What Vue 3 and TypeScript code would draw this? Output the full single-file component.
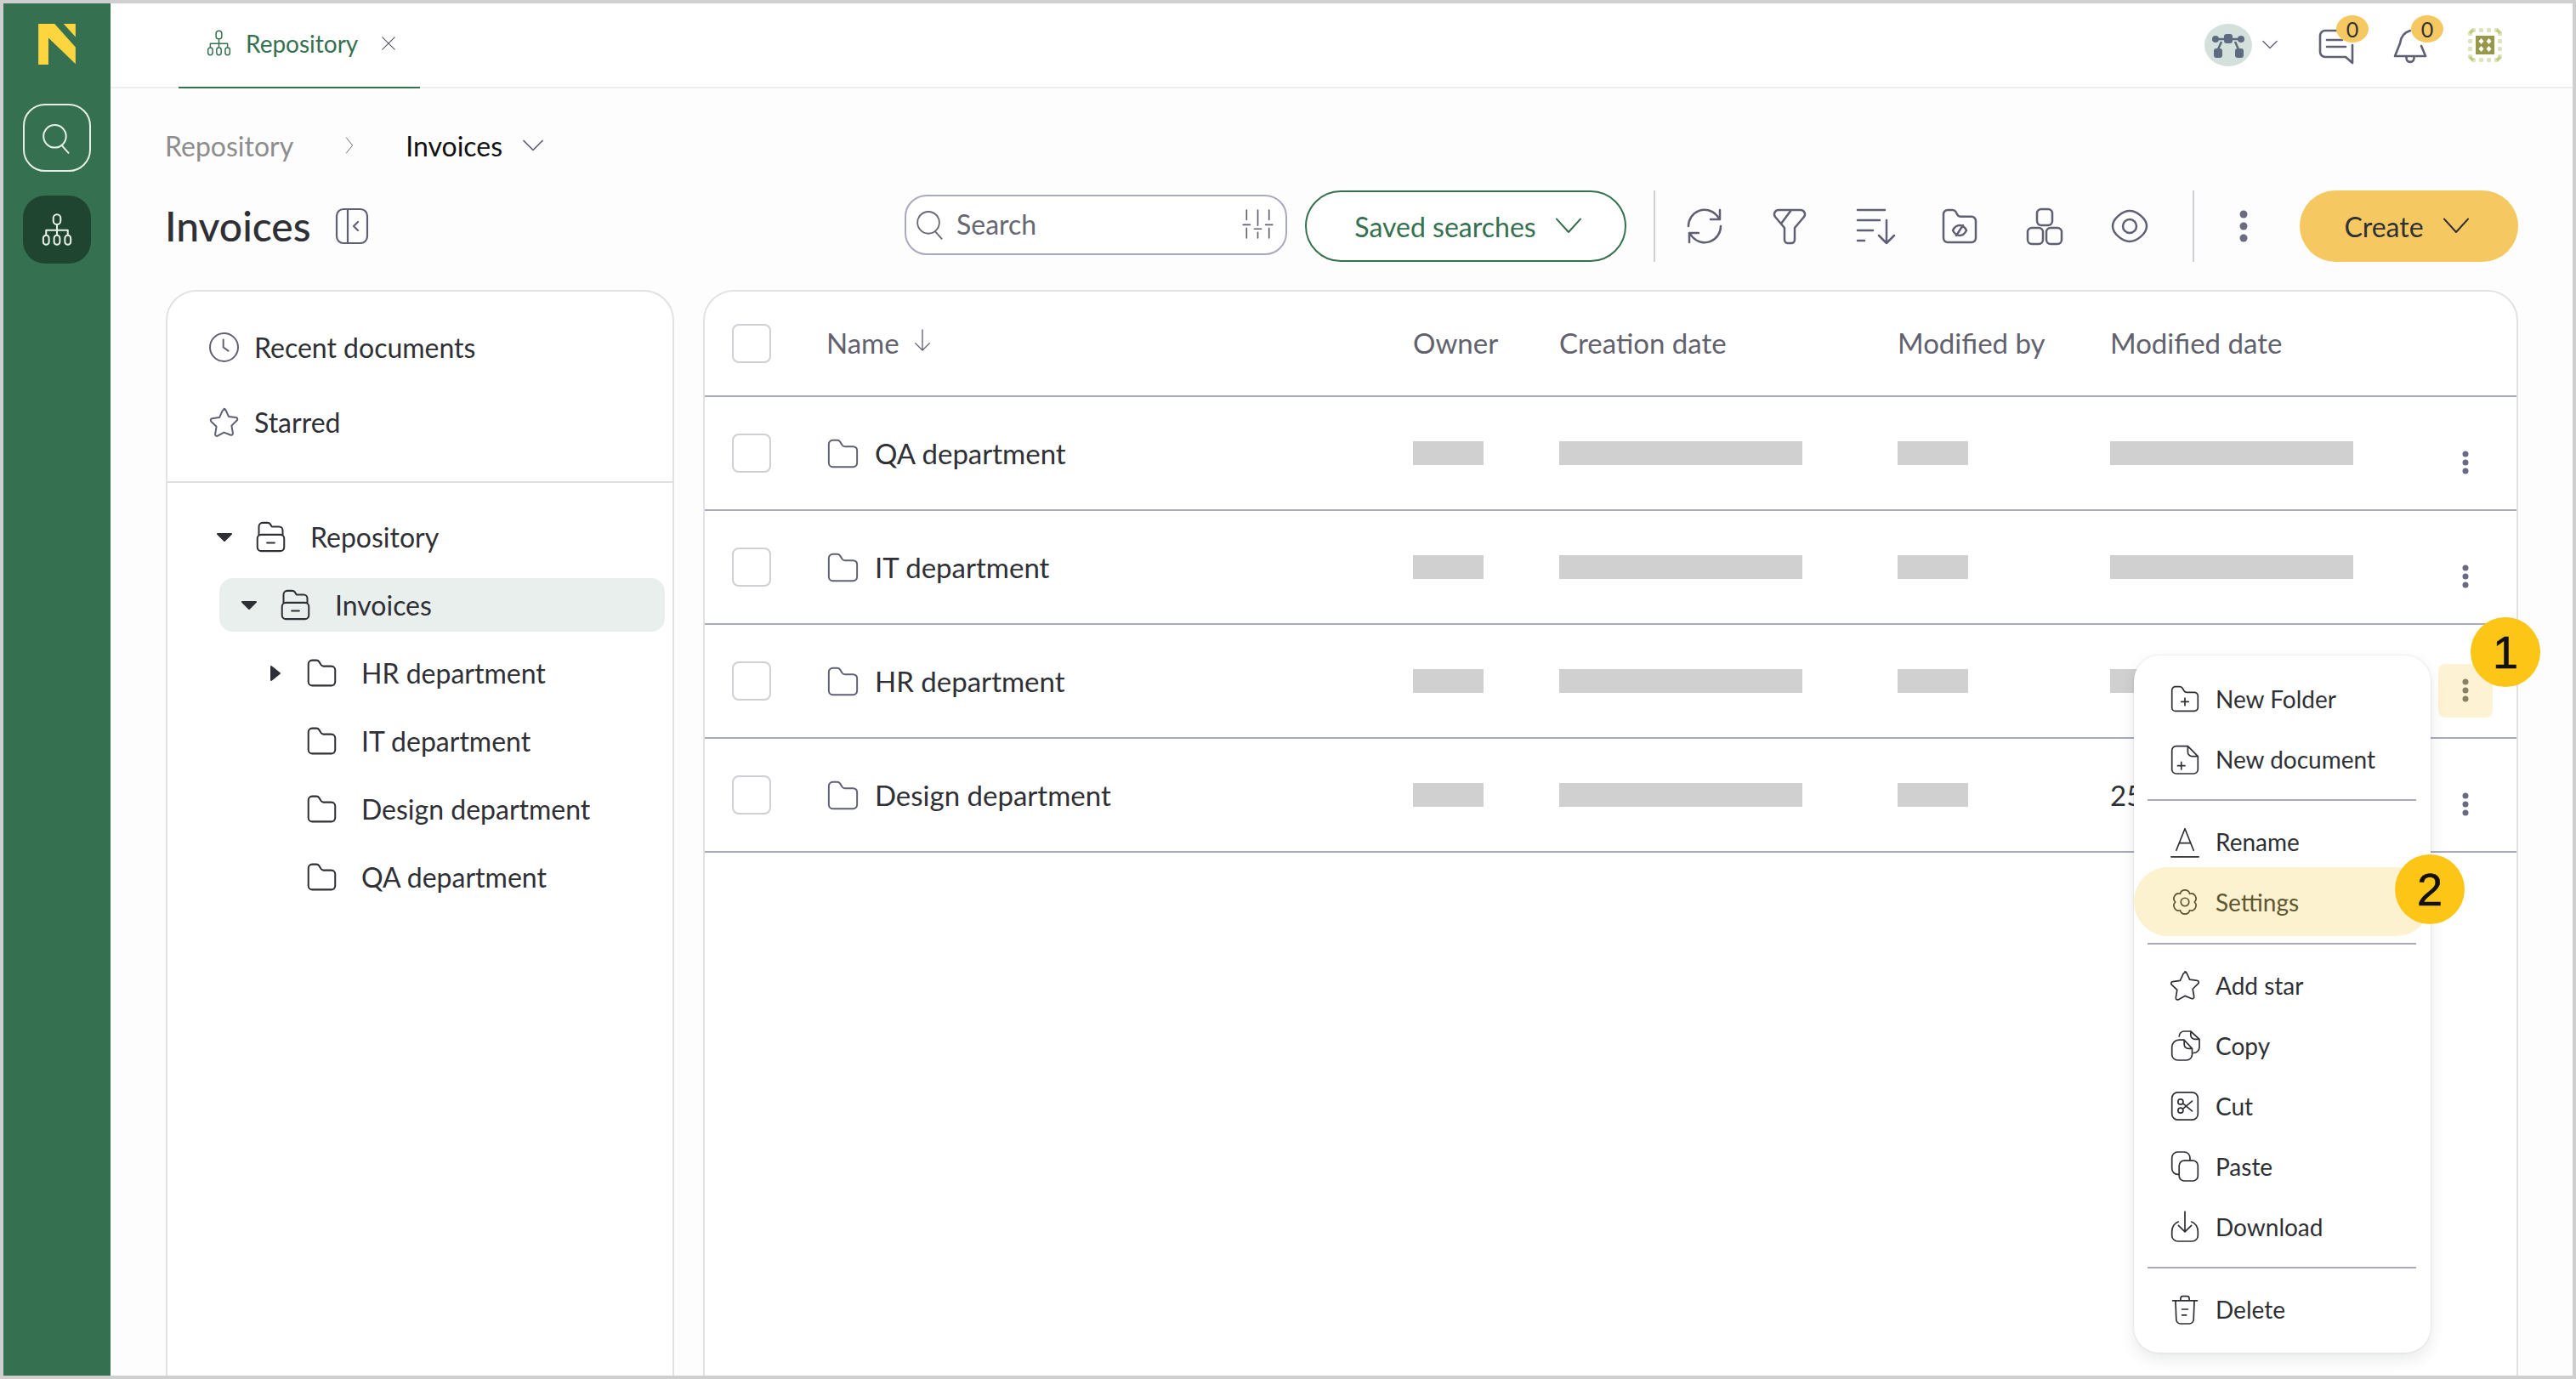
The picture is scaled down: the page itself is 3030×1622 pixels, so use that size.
<template>
  <div class="frame">
    <aside class="rail">
      <svg class="logo" viewBox="42 38 133 146">
        <path fill="#fdd53f" d="M42 38H100L175 122V182L78 88V184H42Z" />
        <path fill="#fdd53f" d="M132 38H175V85Z" />
      </svg>
      <button class="rail-btn outlined">
        <svg class="ic" viewBox="2 2 20 20"><path :d="icons.search" /></svg>
      </button>
      <button class="rail-btn active">
        <svg class="ic" viewBox="2 2 20 20"><path :d="icons.org" /></svg>
      </button>
    </aside>

    <div class="main">
      <header class="topbar">
        <div class="tab">
          <svg class="ic tab-icon" viewBox="2 2 20 20"><path :d="icons.org" /></svg>
          <span>Repository</span>
          <svg class="ic tab-close" viewBox="2 2 20 20"><path d="M4 4l16 16M20 4L4 20" /></svg>
        </div>
        <div class="top-tools">
          <div class="avatar">
            <svg viewBox="0 0 56 50" width="56" height="50">
              <path d="M15 18h8M33 18h8M20 21l-4 9M36 21l4 9" fill="none" stroke="#5d6a80" stroke-width="2.5" />
              <circle cx="13" cy="18" r="4" fill="#5d6a80" />
              <circle cx="43" cy="18" r="4" fill="#5d6a80" />
              <rect x="23" y="12" width="10" height="11" rx="3" fill="#5d6a80" />
              <rect x="11" y="29" width="10" height="11" rx="3" fill="#5d6a80" />
              <rect x="36" y="29" width="10" height="11" rx="3" fill="#5d6a80" />
            </svg>
          </div>
          <svg class="ic avatar-chevron" viewBox="2 2 20 20"><path d="M3 7l9 9 9-9" /></svg>
          <div class="tool chat">
            <svg class="ic" viewBox="2 2 20 20"><path :d="icons.chat" /></svg>
            <span class="count">0</span>
          </div>
          <div class="tool bell">
            <svg class="ic" viewBox="2 2 20 20"><path :d="icons.bell" /></svg>
            <span class="count">0</span>
          </div>
          <svg class="chip" viewBox="0 0 40 40" width="40" height="40">
            <rect v-for="d in chipDots" :key="d.k" :x="d.x" :y="d.y" width="5" height="5" rx="1.5" fill="#dfe3bd" />
            <path d="M2 6l4-4M34 2l4 4M2 34l4 4M34 38l4-4" stroke="#c3ca7c" stroke-width="3.5" fill="none" />
            <rect x="9" y="9" width="22" height="22" fill="#97994a" />
            <path fill="#fff" d="M15.500 12l3 3.500-3 3.500-3-3.500zM24.500 12l3 3.500-3 3.500-3-3.500zM15.500 21l3 3.500-3 3.500-3-3.500zM24.500 21l3 3.500-3 3.500-3-3.500z" />
          </svg>
        </div>
      </header>

      <section class="content">
        <nav class="crumbs">
          <span class="crumb-root">Repository</span>
          <svg class="ic crumb-sep" viewBox="7 1 10 22"><path d="M8 2l8 10-8 10" /></svg>
          <span class="crumb-current">Invoices</span>
          <svg class="ic crumb-chevron" viewBox="2 2 20 20"><path d="M2 7l10 10L22 7" /></svg>
        </nav>

        <div class="toolbar">
          <h1>Invoices</h1>
          <svg class="ic collapse" viewBox="3 2 18 20"><path :d="icons.collapse" /></svg>
          <div class="search">
            <svg class="ic" viewBox="2 2 20 20"><path :d="icons.search" /></svg>
            <span>Search</span>
            <svg class="ic tuner" viewBox="2 2 20 20"><path :d="icons.tuner" /></svg>
          </div>
          <button class="saved">
            Saved searches
            <svg class="ic" viewBox="2 2 20 20"><path d="M2 6l10 11L22 6" /></svg>
          </button>
          <span class="vsep first"></span>
          <div class="actions">
            <svg v-for="a in toolbarIcons" :key="a" class="ic" viewBox="2 2 20 20"><path :d="icons[a]" /></svg>
          </div>
          <span class="vsep second"></span>
          <svg class="dots big" viewBox="0 0 10 38"><circle cx="5" cy="5" r="4.500" /><circle cx="5" cy="19" r="4.500" /><circle cx="5" cy="33" r="4.500" /></svg>
          <button class="create">
            Create
            <svg class="ic" viewBox="2 2 20 20"><path d="M2 6l10 11L22 6" /></svg>
          </button>
        </div>

        <div class="panels">
          <aside class="side-panel">
            <div class="quick">
              <div class="quick-item">
                <svg class="ic" viewBox="2 2 20 20"><path :d="icons.clock" /></svg>Recent documents
              </div>
              <div class="quick-item">
                <svg class="ic" viewBox="2 2 20 20"><path :d="icons.star" /></svg>Starred
              </div>
            </div>
            <div class="tree">
              <div
                v-for="node in tree"
                :key="node.name"
                class="tree-row"
                :class="{ selected: node.selected, root: node.level === 0 }"
                :style="{ paddingLeft: indents[node.level] + 'px' }"
              >
                <span class="caret">
                  <svg v-if="node.caret === 'down'" viewBox="0 0 20 12" width="20" height="12"><path d="M2 2h16l-8 8z" /></svg>
                  <svg v-else-if="node.caret === 'right'" viewBox="0 0 14 20" width="14" height="20"><path d="M2 2l10 8-10 8z" /></svg>
                </span>
                <svg class="ic" viewBox="2 2 20 20"><path :d="node.open ? icons.folderOpen : icons.folder" /></svg>
                <span>{{ node.name }}</span>
              </div>
            </div>
          </aside>

          <div class="table-panel">
            <div class="row head">
              <span class="check"></span>
              <span class="name-head">
                Name
                <svg class="ic" viewBox="2 2 20 20"><path d="M12 2v20M5 15l7 7 7-7" /></svg>
              </span>
              <span class="label">Owner</span>
              <span class="label">Creation date</span>
              <span class="label">Modified by</span>
              <span class="label">Modified date</span>
            </div>
            <div v-for="(r, i) in rows" :key="r" class="row">
              <span class="check"></span>
              <span class="name">
                <svg class="ic" viewBox="2 2 20 20"><path :d="icons.folder" /></svg>{{ r }}
              </span>
              <span class="bar short"></span>
              <span class="bar long"></span>
              <span class="bar short"></span>
              <span v-if="i === 3" class="date">25</span>
              <span v-else class="bar long"></span>
              <span class="kebab" :class="{ hot: i === 2 }">
                <svg class="dots" viewBox="0 0 8 28"><circle cx="4" cy="4" r="3.500" /><circle cx="4" cy="14" r="3.500" /><circle cx="4" cy="24" r="3.500" /></svg>
              </span>
            </div>

            <div class="menu">
              <template v-for="(group, gi) in menu" :key="gi">
                <div v-if="gi > 0" class="menu-sep"></div>
                <div
                  v-for="m in group"
                  :key="m.label"
                  class="menu-item"
                  :class="{ settings: m.label === 'Settings', rename: m.label === 'Rename' }"
                >
                  <svg class="ic" viewBox="2 2 20 20"><path :d="icons[m.icon]" /></svg>
                  {{ m.label }}
                </div>
              </template>
            </div>
            <span class="step one">1</span>
            <span class="step two">2</span>
          </div>
        </div>
      </section>
    </div>
  </div>
</template>

<script setup lang="ts">
// rounded rect as path data, so each icon stays a single <path>
const rr = (x: number, y: number, w: number, h: number, r: number) =>
  `M${x + r} ${y}h${w - 2 * r}a${r} ${r} 0 0 1 ${r} ${r}v${h - 2 * r}a${r} ${r} 0 0 1 -${r} ${r}h-${w - 2 * r}a${r} ${r} 0 0 1 -${r} -${r}v-${h - 2 * r}a${r} ${r} 0 0 1 ${r} -${r}z`

const circle = (cx: number, cy: number, r: number) =>
  `M${cx - r} ${cy}a${r} ${r} 0 1 0 ${2 * r} 0a${r} ${r} 0 1 0 -${2 * r} 0z`

// six scalloped lobes, one pointing straight up
function gear() {
  const pt = (k: number) => {
    const a = ((-120 + 60 * k) * Math.PI) / 180
    return `${(12 + 6.6 * Math.cos(a)).toFixed(2)} ${(12 + 6.6 * Math.sin(a)).toFixed(2)}`
  }
  let d = `M${pt(0)}`
  for (let k = 1; k <= 6; k++) d += `A3.4 3.4 0 0 1 ${pt(k)}`
  return `${d}z${circle(12, 12, 2.8)}`
}

const folder = 'M3 6A2.500 2.500 0 0 1 5.500 3.500h2.800c.8 0 1.500.4 1.900 1l1.300 2.100c.4.6 1 .9 1.700.9h5.300A2.500 2.500 0 0 1 21 10v8a2.500 2.500 0 0 1-2.500 2.500h-13A2.500 2.500 0 0 1 3 18z'

const icons: Record<string, string> = {
  search: `${circle(10.5, 11, 7.8)}M15.500 17.500l4.500 5`,
  org: `${rr(9.5, 1.5, 5, 7, 2.5)}M12 8.500V16M4.500 16v-3.500h15V16${rr(2.5, 16, 4, 6.5, 2)}${rr(10, 16, 4, 6.5, 2)}${rr(17.5, 16, 4, 6.5, 2)}`,
  chat: 'M13 3.500H6a3 3 0 0 0-3 3V16a3 3 0 0 0 3 3h12l4 3.500V12M7 9h9M7 13h11',
  bell: 'M12 3.500c-3.500 1-5.500 3.500-6 7.500l-3 7.500h18l-2.500-6M10 18.500a2.300 2.300 0 1 0 4 0',
  collapse: `${rr(3, 2, 18, 20, 4)}M9.500 2v20M15.500 9.500L13 12l2.500 2.500`,
  tuner: 'M4 2v7M4 15v7M1.500 12.500h5M12 2v11M12 18v4M9.500 15.500h5M20 2v7M20 15v7M17.500 12.500h5',
  refresh: 'M2.500 12A9.500 9.500 0 0 1 19 5.500L21 8M21 2.500V8h-5.500M21.500 12A9.500 9.500 0 0 1 5 18.500L3 16M3 21.500V16h5.500',
  funnel: 'M5.500 2.500h13a2.500 2.500 0 0 1 1.900 4.100L15 13v7a2 2 0 0 1-2 2h-2a2 2 0 0 1-2-2v-7L3.600 6.600A2.500 2.500 0 0 1 5.500 2.500zM13 2.500L7 10.500',
  sort: 'M2 2.500h16M2 8.500h13M2 14.500h9M2 20.500h4M19 8.500V22M14.500 17.500L19 22l4.500-4.500',
  folderEye: 'M2.500 5A2.500 2.500 0 0 1 5 2.500h2.800c.8 0 1.500.4 1.900 1l1 1.800c.4.7 1.100 1.100 1.900 1.100H19A2.500 2.500 0 0 1 21.500 9v10A2.500 2.500 0 0 1 19 21.500H5A2.500 2.500 0 0 1 2.500 19zM8 14.500c1-2 2.500-3 4-3s3 1 4 3c-1 2-2.500 3-4 3s-3-1-4-3zM14 11.500l-4 6',
  shapes: `${rr(7.5, 2, 9, 9.5, 2.5)}${rr(2, 13, 9, 9.5, 2.5)}${rr(13, 13, 9, 9.5, 2.5)}`,
  eye: `M12 3c4 0 10 4.500 10 9s-6 9-10 9-10-4.500-10-9 6-9 10-9z${circle(12, 12, 4)}`,
  clock: `${circle(12, 12, 10)}M11.500 6.500V12l3.500 2.500`,
  star: 'M12 2.500c.5 0 .9.300 1.100.700l2.200 4.800 5.200.7c1 .1 1.400 1.400.7 2.100l-3.800 3.700.9 5.300c.2 1-.9 1.800-1.800 1.300L12 19.300l-4.500 2.500c-.9.500-2-.3-1.800-1.300l.9-5.300-3.800-3.700c-.7-.7-.3-2 .7-2.100l5.200-.7 2.200-4.800c.2-.4.600-.7 1.100-.7z',
  folder,
  folderOpen: `M4 10.500V5A2.500 2.500 0 0 1 6.500 2.500h3.300c.8 0 1.500.4 1.900 1l1 1.600h4.800A2.500 2.500 0 0 1 20 7.600v2.900M5.500 10.500h13A2.500 2.500 0 0 1 21 13v6a2.500 2.500 0 0 1-2.500 2.500h-13A2.500 2.500 0 0 1 3 19v-6a2.500 2.500 0 0 1 2.500-2.500zM9.500 16h5`,
  newFolder: `${folder}M12 11.500v5M9.500 14h5`,
  newDoc: 'M14 3H6a3 3 0 0 0-3 3v13a3 3 0 0 0 3 3h12a3 3 0 0 0 3-3v-9l-7-7zM14 3v4a3 3 0 0 0 3 3h4M9.500 14v5M7 16.500h5',
  rename: 'M6 18L12 3l6 15M8 13h8M2.500 22.500h19',
  gear: gear(),
  copy: 'M3 13a5 5 0 0 1 5-5h3.500l5.500 6v4a4 4 0 0 1-4 4H7a4 4 0 0 1-4-4zM11.500 8v3a3 3 0 0 0 3 3H17M8 5.500A3.500 3.500 0 0 1 11.500 2h4.500l6 5.500V13a4 4 0 0 1-4 4M16 2v2.500a3 3 0 0 0 3 3h3',
  cut: `${rr(3, 2.5, 18, 19, 4)}${circle(9, 9, 1.8)}${circle(9, 15, 1.8)}M10.500 10L17 15.500M10.500 14L17 8.500`,
  paste: `M8 17.500H7A4 4 0 0 1 3 13.500V6a4 4 0 0 1 4-4h4.500a4 4 0 0 1 4 4v1.500${rr(8, 8, 13, 14, 3.5)}`,
  download: 'M12 1.500V15M7.500 11l4.500 4.500 4.500-4.500M7.500 8.500C5 9.500 3 12 3 15.500V18a4 4 0 0 0 4 4h10a4 4 0 0 0 4-4v-2.500c0-3.500-2-6-4.500-7',
  trash: 'M3.500 6h17M9 6V4.500A1.500 1.500 0 0 1 10.500 3h3A1.500 1.500 0 0 1 15 4.500V6M5.500 6l.5 13a3 3 0 0 0 3 3h6a3 3 0 0 0 3-3l.5-13M10 12h4M10 16h3',
}

const toolbarIcons = ['refresh', 'funnel', 'sort', 'folderEye', 'shapes', 'eye']

interface TreeNode {
  name: string
  level: number
  caret?: 'down' | 'right'
  open?: boolean
  selected?: boolean
}

const indents = [10, 25, 56]

const tree: TreeNode[] = [
  { name: 'Repository', level: 0, caret: 'down', open: true },
  { name: 'Invoices', level: 1, caret: 'down', open: true, selected: true },
  { name: 'HR department', level: 2, caret: 'right' },
  { name: 'IT department', level: 2 },
  { name: 'Design department', level: 2 },
  { name: 'QA department', level: 2 },
]

const rows = ['QA department', 'IT department', 'HR department', 'Design department']

const menu = [
  [
    { label: 'New Folder', icon: 'newFolder' },
    { label: 'New document', icon: 'newDoc' },
  ],
  [
    { label: 'Rename', icon: 'rename' },
    { label: 'Settings', icon: 'gear' },
  ],
  [
    { label: 'Add star', icon: 'star' },
    { label: 'Copy', icon: 'copy' },
    { label: 'Cut', icon: 'cut' },
    { label: 'Paste', icon: 'paste' },
    { label: 'Download', icon: 'download' },
  ],
  [{ label: 'Delete', icon: 'trash' }],
]

// ring of small squares round the chip icon
const chipDots: { k: number; x: number; y: number }[] = []
for (let i = 0; i < 4; i++) {
  const p = 4 + i * 9
  chipDots.push({ k: i, x: p, y: 0 }, { k: i + 10, x: p, y: 35 }, { k: i + 20, x: 0, y: p }, { k: i + 30, x: 35, y: p })
}
</script>

<style>
html,
body {
  margin: 0;
  background: #fff;
}
</style>

<style scoped>
.frame {
  width: 3030px;
  height: 1622px;
  box-sizing: border-box;
  border: 4px solid #cfcfcf;
  display: flex;
  overflow: hidden;
  font-family: Lato, "Liberation Sans", sans-serif;
  color: #2f3035;
  background: #fdfdfd;
}

.ic {
  fill: none;
  stroke: currentColor;
  stroke-width: 1.4;
  stroke-linecap: round;
  stroke-linejoin: round;
  flex: none;
  overflow: visible;
}

/* left rail */
.rail {
  width: 126px;
  flex: none;
  background: #357050;
  display: flex;
  flex-direction: column;
  align-items: center;
  padding-top: 24px;
  box-sizing: border-box;
}

.logo {
  width: 44px;
  height: 48px;
  margin-bottom: 46px;
}

.rail-btn {
  width: 80px;
  height: 80px;
  border-radius: 26px;
  border: 2px solid transparent;
  background: none;
  padding: 0;
  display: flex;
  align-items: center;
  justify-content: center;
  color: #e6efe6;
  margin-bottom: 28px;
}

.rail-btn .ic {
  width: 34px;
  height: 34px;
  stroke-width: 1.2;
}

.rail-btn.outlined {
  border-color: #e6efe6;
}

.rail-btn.active {
  background: #1f4530;
}

/* top bar */
.main {
  flex: 1;
  min-width: 0;
  display: flex;
  flex-direction: column;
}

.topbar {
  height: 100px;
  flex: none;
  box-sizing: border-box;
  background: #fff;
  border-bottom: 2px solid #eeeeee;
  display: flex;
  align-items: stretch;
  padding-left: 80px;
  padding-right: 83px;
}

.tab {
  width: 284px;
  height: 100px;
  box-sizing: border-box;
  padding: 0 0 5px 34px;
  border-bottom: 2px solid #357050;
  color: #357050;
  font-size: 28px;
  display: flex;
  align-items: center;
}

.tab-icon {
  width: 27px;
  height: 27px;
  margin-right: 18px;
  stroke-width: 1.1;
}

.tab-close {
  width: 18px;
  height: 18px;
  margin-left: 27px;
  stroke-width: 1.2;
  color: #55555f;
}

.top-tools {
  margin-left: auto;
  display: flex;
  align-items: center;
}

.avatar {
  width: 56px;
  height: 50px;
  border-radius: 50%;
  background: #d3e0dc;
}

.avatar-chevron {
  width: 18px;
  height: 18px;
  margin: 0 48px 0 12px;
  color: #5f6073;
  stroke-width: 1.5;
}

.tool {
  position: relative;
  width: 40px;
  height: 40px;
  color: #5f6073;
  margin-right: 48px;
}

.tool .ic {
  width: 40px;
  height: 40px;
  stroke-width: 1.3;
}

.count {
  position: absolute;
  left: 21px;
  top: -15px;
  width: 38px;
  height: 32px;
  border-radius: 50%;
  background: #f6c862;
  color: #2f3035;
  font-size: 25px;
  line-height: 32px;
  text-align: center;
}

/* breadcrumbs + toolbar */
.content {
  flex: 1;
  min-height: 0;
  display: flex;
  flex-direction: column;
  padding: 44px 64px 0 65px;
}

.crumbs {
  height: 46px;
  display: flex;
  align-items: center;
  font-size: 32px;
  margin-bottom: 30px;
  margin-left: -1px;
}

.crumb-root {
  color: #8d8d8d;
}

.crumb-sep {
  width: 10px;
  height: 20px;
  margin: 0 61px 0 61px;
  stroke-width: 1;
  color: #5f6073;
}

.crumb-current {
  color: #111;
}

.crumb-chevron {
  width: 22px;
  height: 22px;
  margin-left: 25px;
  color: #5f6073;
  stroke-width: 1.6;
}

.toolbar {
  height: 84px;
  flex: none;
  display: flex;
  align-items: center;
  margin-bottom: 33px;
}

h1 {
  margin: 0 0 0 -1px;
  font-size: 48px;
  font-weight: 500;
  line-height: 60px;
  color: #2f3035;
}

.collapse {
  width: 36px;
  height: 40px;
  margin-left: 30px;
  color: #5f6073;
  stroke-width: 1.1;
}

.search {
  width: 450px;
  height: 71px;
  margin: -4px 0 0 auto;
  box-sizing: border-box;
  border: 2px solid #a9a9bf;
  border-radius: 26px;
  background: #fff;
  display: flex;
  align-items: center;
  padding: 0 16px 2px 12px;
  font-size: 32px;
  color: #686873;
}

.search .ic {
  width: 33px;
  height: 33px;
  margin-right: 14px;
  color: #686873;
  stroke-width: 1.1;
}

.search .tuner {
  margin: 0 0 0 auto;
  color: #5f6073;
  stroke-width: 1;
}

.saved {
  width: 378px;
  height: 84px;
  margin-left: 21px;
  box-sizing: border-box;
  border: 2px solid #357050;
  border-radius: 42px;
  background: #fff;
  color: #357050;
  font: inherit;
  font-size: 32px;
  display: flex;
  align-items: center;
  justify-content: center;
  gap: 24px;
  padding: 0 0 0 4px;
}

.saved .ic,
.create .ic {
  width: 28px;
  height: 28px;
  stroke-width: 1.5;
}

.vsep {
  width: 2px;
  height: 84px;
  background: #cfcfd4;
  flex: none;
}

.vsep.first {
  margin: 0 38px 0 32px;
}

.vsep.second {
  margin: 0 53px 0 54px;
}

.actions {
  display: flex;
  gap: 60px;
  color: #5f6073;
}

.actions .ic {
  width: 40px;
  height: 40px;
  stroke-width: 1.25;
}

.dots {
  fill: #6a6a80;
  display: block;
}

.dots.big {
  width: 10px;
  height: 38px;
  flex: none;
}

.create {
  width: 257px;
  height: 84px;
  margin-left: 61px;
  flex: none;
  border: none;
  border-radius: 42px;
  background: #f6c862;
  color: #2f3035;
  font: inherit;
  font-size: 32px;
  display: flex;
  align-items: center;
  justify-content: center;
  gap: 24px;
  padding: 0 7px 0 0;
}

/* panels */
.panels {
  flex: 1;
  display: grid;
  grid-template-columns: 598px 1fr;
  gap: 34px;
  min-height: 0;
}

.side-panel,
.table-panel {
  background: #fff;
  border: 2px solid #e2e2e2;
  border-radius: 36px;
  height: 1340px;
  box-sizing: border-box;
}

.quick {
  padding: 21px 0 26px 50px;
  border-bottom: 2px solid #dfdfdf;
}

.quick-item {
  height: 88px;
  display: flex;
  align-items: center;
  gap: 19px;
  font-size: 32px;
}

.quick-item .ic {
  width: 33px;
  height: 33px;
  color: #5f6073;
  stroke-width: 1.2;
}

.tree {
  padding: 32px 9px 0 61px;
}

.tree-row {
  height: 63px;
  margin-bottom: 17px;
  border-radius: 16px;
  display: flex;
  align-items: center;
  gap: 29px;
  font-size: 32px;
}

.tree-row.root {
  margin-left: -14px;
}

.tree-row.selected {
  background: #e9efed;
}

.tree-row .ic {
  width: 35px;
  height: 35px;
  stroke-width: 1.15;
  margin-left: -1px;
}

.caret {
  width: 20px;
  height: 20px;
  flex: none;
  display: flex;
  align-items: center;
  justify-content: center;
  margin-right: -1px;
}

.caret svg {
  fill: #2f3035;
  stroke: #2f3035;
  stroke-width: 2;
  stroke-linejoin: round;
}

.table-panel {
  position: relative;
}

.row {
  height: 134px;
  box-sizing: border-box;
  border-bottom: 2px solid #a9a9bf;
  display: grid;
  grid-template-columns: 112px 689px 172px 398px 250px 386px 64px;
  align-items: center;
  padding-left: 32px;
  font-size: 33px;
}

.row.head {
  height: 124px;
  color: #62626e;
}

.row.head .label,
.name-head {
  margin-top: -2px;
}

.check {
  width: 46px;
  height: 46px;
  box-sizing: border-box;
  border: 2px solid #cfcfd4;
  border-radius: 8px;
  background: #fff;
}

.name-head {
  display: flex;
  align-items: center;
  gap: 15px;
  margin-left: -1px;
}

.name-head .ic {
  width: 24px;
  height: 26px;
  margin-top: -6px;
  color: #5f6073;
  stroke-width: 1.1;
}

.name {
  display: flex;
  align-items: center;
  gap: 19px;
}

.name .ic {
  width: 37px;
  height: 37px;
  color: #5f6073;
  stroke-width: 1.05;
}

.bar {
  height: 28px;
  background: #d0d0d0;
}

.bar.short {
  width: 83px;
}

.bar.long {
  width: 286px;
}

.date {
  color: #2f3035;
}

.kebab {
  width: 64px;
  height: 63px;
  border-radius: 8px;
  display: flex;
  align-items: center;
  justify-content: center;
  margin-top: 22px;
}

.kebab .dots {
  width: 8px;
  height: 28px;
}

.kebab.hot {
  background: #fdf2d4;
}

.kebab.hot .dots {
  fill: #8a8064;
}

/* context menu */
.menu {
  position: absolute;
  left: 1681px;
  top: 428px;
  width: 349px;
  box-sizing: border-box;
  padding: 15px 0 16px;
  background: #fff;
  border-radius: 30px;
  box-shadow: 0 0 3px rgba(0, 0, 0, 0.12), 0 8px 18px rgba(40, 50, 60, 0.1);
  font-size: 28px;
}

.menu-sep {
  height: 2px;
  margin: 12px 17px 12px 16px;
  background: #a9a9b8;
}

.menu-item {
  height: 71px;
  display: flex;
  align-items: center;
  gap: 19px;
  padding-left: 43px;
}

.menu-item .ic {
  width: 34px;
  height: 34px;
  stroke-width: 1;
}

/* 18px wins over the separator's 12px: the two margins collapse */
.menu-item.rename {
  height: 60px;
  margin-top: 18px;
}

.menu-item.settings {
  height: 81px;
  margin: 0 0 -4px;
  border-radius: 40px;
  background: #fdf2cf;
  color: #5d5630;
}

/* numbered callouts */
.step {
  position: absolute;
  width: 82px;
  height: 82px;
  border-radius: 50%;
  background: #fdc516;
  color: #111;
  font-family: "Liberation Sans", Arial, sans-serif;
  font-size: 54px;
  -webkit-text-stroke: 0.6px #111;
  line-height: 82px;
  text-align: center;
}

.step.one {
  left: 2077px;
  top: 383px;
}

.step.two {
  left: 1988px;
  top: 662px;
}
</style>
